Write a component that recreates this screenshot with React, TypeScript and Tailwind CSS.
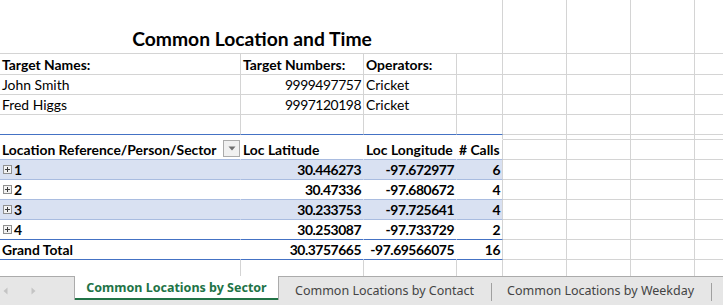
import React from "react";

const F = { fontFamily: "Lato, 'Liberation Sans', sans-serif" };

function Plus() {
  return (
    <span className="mr-[2px] ml-[3px] mb-[4px] flex h-[9px] w-[9px] items-center justify-center border border-[#8F8F8F] bg-[#F2F2F2]">
      <svg width="7" height="7" viewBox="0 0 7 7">
        <path d="M1 3.5H6M3.5 1V6" stroke="#3C3C3C" strokeWidth="1" />
      </svg>
    </span>
  );
}

function FilterBtn() {
  return (
    <span className="mb-[1px] flex h-[17px] w-[17px] shrink-0 items-center justify-center border border-[#ABABAB] bg-[#F0F0F0]">
      <svg width="8" height="5" viewBox="0 0 8 5">
        <path d="M0.5 0.5H7.5L4 4.5Z" fill="#6E6E6E" />
      </svg>
    </span>
  );
}

const base = "flex items-end overflow-hidden whitespace-nowrap px-[2px] pb-[1px] leading-[17px] text-[13.9px] text-black";
const num = "tracking-[-0.45px]";
const g = "border-r border-b border-[#D4D4D4]";

function Empty4() {
  return (
    <>
      <div className={g} />
      <div className={g} />
      <div className={g} />
      <div className={g} />
    </>
  );
}

type PRow = { label: string; lat: string; lon: string; calls: string; fill: boolean; last: boolean };

const rows: PRow[] = [
  { label: "1", lat: "30.446273", lon: "-97.672977", calls: "6", fill: true, last: false },
  { label: "2", lat: "30.47336", lon: "-97.680672", calls: "4", fill: false, last: false },
  { label: "3", lat: "30.233753", lon: "-97.725641", calls: "4", fill: true, last: false },
  { label: "4", lat: "30.253087", lon: "-97.733729", calls: "2", fill: false, last: true },
];

export default function App() {
  return (
    <div className="flex h-[305px] w-[723px] flex-col overflow-hidden bg-white" style={F}>
      <div className="h-[276px] overflow-hidden">
        <div className="grid grid-cols-[241px_123px_93px_46px_64px_64px_64px_64px] grid-rows-[54px_21px_20px_20px_20px_5px_20px_20px_20px_20px_20px_20px_20px_20px]">
          {/* Row 1 */}
          <div className={`col-span-4 ${g} flex items-end justify-center pb-[3px] pl-[2px] text-[19.3px] font-bold leading-[22px] text-black`}>
            Common Location and Time
          </div>
          <Empty4 />
          {/* Row 2 */}
          <div className={`${base} ${g} font-bold`}>Target Names:</div>
          <div className={`${base} ${g} font-bold`}>Target Numbers:</div>
          <div className={`${base} ${g} font-bold`}>Operators:</div>
          <div className={g} />
          <Empty4 />
          {/* Row 3 */}
          <div className={`${base} ${g}`}>John Smith</div>
          <div className={`${base} ${g} ${num} justify-end`}>9999497757</div>
          <div className={`${base} ${g}`}>Cricket</div>
          <div className={g} />
          <Empty4 />
          {/* Row 4 */}
          <div className={`${base} ${g}`}>Fred Higgs</div>
          <div className={`${base} ${g} ${num} justify-end`}>9997120198</div>
          <div className={`${base} ${g}`}>Cricket</div>
          <div className={g} />
          <Empty4 />
          {/* Row 5 */}
          <div className="border-r border-b border-r-[#D4D4D4] border-b-[#4472C4]" />
          <div className="border-r border-b border-r-[#D4D4D4] border-b-[#4472C4]" />
          <div className="border-r border-b border-r-[#D4D4D4] border-b-[#4472C4]" />
          <div className="border-r border-b border-r-[#D4D4D4] border-b-[#4472C4]" />
          <Empty4 />
          {/* Row 6 tiny */}
          <div className="border-r border-b border-white" />
          <div className="border-r border-b border-white" />
          <div className="border-r border-b border-white" />
          <div className="border-r border-b border-r-[#D4D4D4] border-b-white" />
          <Empty4 />
          {/* Row 7 header */}
          <div className={`${base} border-r border-b border-r-white border-b-[#A9BCE0] justify-between pr-0 font-bold`}>
            <span>Location Reference/Person/Sector</span>
            <FilterBtn />
          </div>
          <div className={`${base} border-r border-b border-r-white border-b-[#A9BCE0] font-bold`}>Loc Latitude</div>
          <div className={`${base} border-r border-b border-r-white border-b-[#A9BCE0] font-bold`}>Loc Longitude</div>
          <div className={`${base} border-r border-b border-r-[#D4D4D4] border-b-[#A9BCE0] font-bold`}># Calls</div>
          <Empty4 />
          {/* Pivot rows */}
          {rows.map((r) => {
            const bg = r.fill ? "bg-[#D9E1F2]" : "bg-white";
            const rb = r.fill ? "border-r-[#D9E1F2]" : "border-r-white";
            const bb = r.last ? "border-b-[#4472C4]" : "border-b-[#A9BCE0]";
            return (
              <React.Fragment key={r.label}>
                <div className={`${base} border-r border-b ${rb} ${bb} ${bg} pl-0 font-bold`}>
                  <Plus />
                  <span>{r.label}</span>
                </div>
                <div className={`${base} border-r border-b ${rb} ${bb} ${bg} ${num} justify-end font-bold`}>{r.lat}</div>
                <div className={`${base} border-r border-b ${rb} ${bb} ${bg} ${num} justify-end font-bold`}>{r.lon}</div>
                <div className={`${base} border-r border-b border-r-[#D4D4D4] ${bb} ${bg} ${num} justify-end font-bold`}>{r.calls}</div>
                <Empty4 />
              </React.Fragment>
            );
          })}
          {/* Grand total */}
          <div className={`${base} border-r border-b border-r-white border-b-[#4472C4] font-bold`}>Grand Total</div>
          <div className={`${base} border-r border-b border-r-white border-b-[#4472C4] ${num} justify-end font-bold`}>30.3757665</div>
          <div className={`${base} border-r border-b border-r-white border-b-[#4472C4] ${num} justify-end font-bold`}>-97.69566075</div>
          <div className={`${base} border-r border-b border-r-[#D4D4D4] border-b-[#4472C4] ${num} justify-end font-bold`}>16</div>
          <Empty4 />
          {/* Empty row */}
          <Empty4 />
          <Empty4 />
          <Empty4 />
          <Empty4 />
        </div>
      </div>
      {/* Tab bar */}
      <div className="flex h-[29px] bg-[#E6E6E6]" style={{ fontFamily: "'Noto Sans', 'Open Sans', sans-serif" }}>
        <div className="flex w-[74px] items-center gap-[23px] border-t border-[#ABABAB] pl-[3px]">
          <svg width="5" height="8" viewBox="0 0 5 8">
            <path d="M4.5 0.5V7.5L0.5 4Z" fill="#C4C4C4" />
          </svg>
          <svg width="5" height="8" viewBox="0 0 5 8">
            <path d="M0.5 0.5V7.5L4.5 4Z" fill="#C4C4C4" />
          </svg>
        </div>
        <div className="flex h-[24px] w-[205px] flex-col border-x border-[#ABABAB] bg-white">
          <div className="flex flex-1 items-center justify-center pt-[3px] text-[12.5px] font-bold text-[#217346]">
            Common Locations by Sector
          </div>
          <div className="h-[2px] bg-[#217346]" />
        </div>
        <div className="flex flex-1 items-center border-t border-[#ABABAB] pt-[1px] text-[12.5px] text-[#444444]">
          <span className="pl-[16px] pr-[17px]">Common Locations by Contact</span>
          <span className="h-[18px] w-px bg-[#A0A0A0]" />
          <span className="pl-[15px] pr-[17px]">Common Locations by Weekday</span>
          <span className="h-[18px] w-px bg-[#A0A0A0]" />
        </div>
      </div>
    </div>
  );
}
